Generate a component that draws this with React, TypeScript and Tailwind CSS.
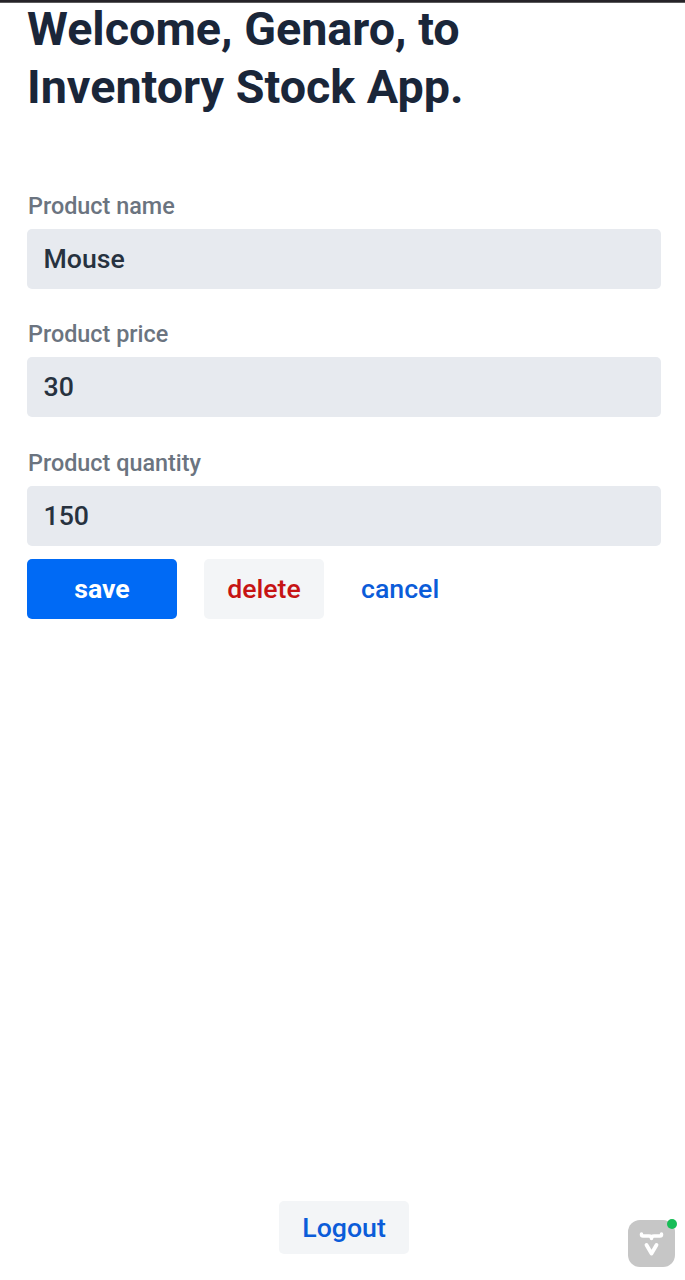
const fields = [
  { label: "Product name", value: "Mouse" },
  { label: "Product price", value: "30" },
  { label: "Product quantity", value: "150" },
];

export default function App() {
  return (
    <div className="relative flex h-[1280px] w-[685px] flex-col overflow-hidden border-t-2 border-[#262328] bg-white font-['Roboto',sans-serif] text-[#1a2639]">
      <div className="h-px shrink-0 bg-[#5b5a5c]" />
      <h1 className="-mt-[3px] ml-[27px] w-[500px] text-[46.7px] leading-[58px] font-bold">
        Welcome, Genaro, to<br />Inventory Stock App.
      </h1>
      <form className="mt-[70.700px] mr-[24.500px] ml-[27px] flex flex-col">
        {fields.map((f) => (
          <label key={f.label} className="flex h-[128.600px] flex-col">
            <span className="ml-[1px] h-[42px] pt-[5px] text-[23.4px] leading-[28px] font-medium text-[#6b7480]">{f.label}</span>
            <input className="h-[60px] rounded-[5px] bg-[#e7eaef] px-[16.500px] text-[26.7px] font-medium text-[#27323f] outline-none" defaultValue={f.value} />
          </label>
        ))}
        <div className="-mt-[13px] flex h-[60px] text-[26.7px] font-medium">
          <button type="button" className="w-[150px] rounded-[5px] bg-[#006af5] font-bold text-white">save</button>
          <button type="button" className="ml-[27px] w-[120px] rounded-[5px] bg-[#f3f5f7] text-[#c61414]">delete</button>
          <button type="button" className="ml-[37px] text-[#0b5cd9]">cancel</button>
        </div>
      </form>
      <button type="button" className="mt-auto mb-[26px] ml-[279px] h-[53px] w-[130px] rounded-[5px] bg-[#f3f5f7] pt-[1px] text-[26.7px] font-medium text-[#0b5cd9]">Logout</button>
      <div className="absolute right-[10.500px] bottom-[13px] size-[47px] rounded-[12px] bg-[#c6c6c6]">
        <svg viewBox="0 0 47 47" className="size-full" fill="none" stroke="white" strokeWidth="3.500" strokeLinecap="round" strokeLinejoin="round">
          <path d="M13.500 14v.5q0 1.500 1.500 1.500h6q2.500 0 2.500 2.500q0-2.500 2.500-2.500h6q1.500 0 1.500-1.500v-.5" />
          <path d="m18.500 25 5 8.500 5-8.500" strokeWidth="3.800" />
        </svg>
        <span className="absolute -top-[1px] -right-[2px] size-[10px] rounded-full bg-[#18bd57]" />
      </div>
    </div>
  );
}
